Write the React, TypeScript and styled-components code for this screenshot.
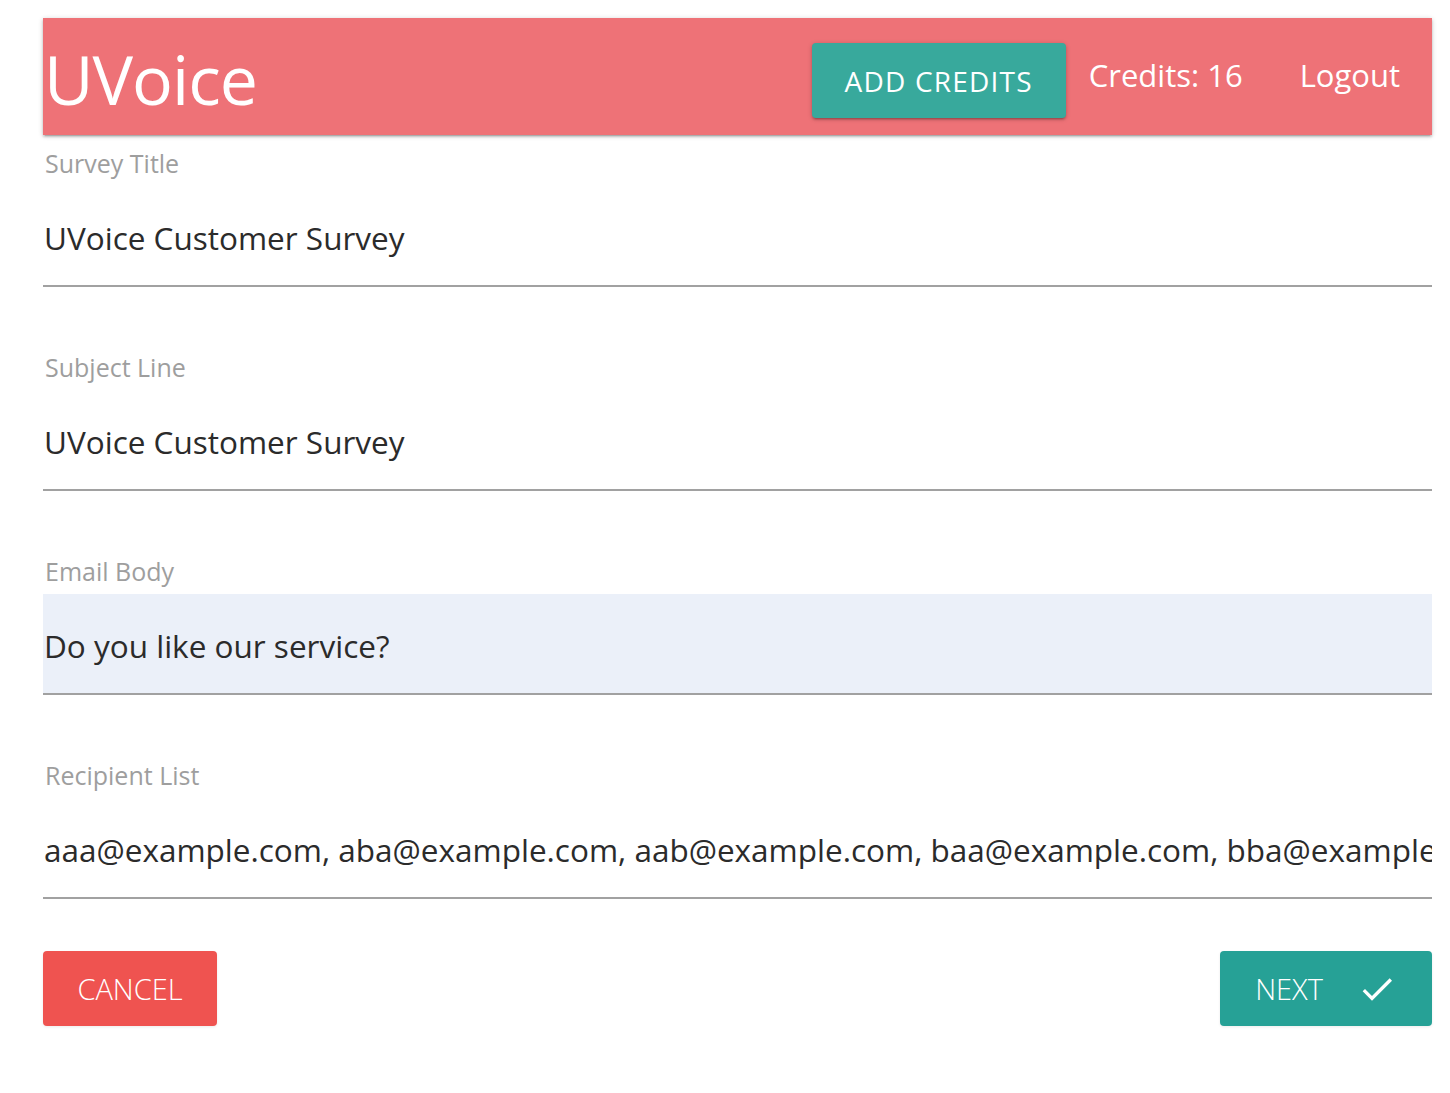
import React from "react";
import styled, { createGlobalStyle } from "styled-components";

const GlobalStyle = createGlobalStyle`
  html, body { margin: 0; padding: 0; background: #ffffff; }
  body { font-family: "Open Sans", "Noto Sans", sans-serif; }
  * { box-sizing: border-box; }
`;

const Page = styled.div`
  padding: 18px 18px 40px 43px;
`;

const Nav = styled.nav`
  height: 117px;
  background: #ee7277;
  display: flex;
  align-items: center;
  justify-content: space-between;
  box-shadow: 0 2px 2px 0 rgba(0,0,0,0.14), 0 3px 1px -2px rgba(0,0,0,0.12), 0 1px 5px 0 rgba(0,0,0,0.2);
`;

const Logo = styled.a`
  color: #fff;
  font-size: 68px;
  font-weight: 400;
  letter-spacing: -1px;
  padding-left: 1px;
  line-height: 1;
  margin-top: 4px;
  text-decoration: none;
`;

const NavItems = styled.div`
  display: flex;
  align-items: center;
  height: 100%;
  padding-right: 32px;
`;

const NavButton = styled.button`
  height: 75px;
  padding: 0 33px;
  margin-top: 8px;
  border: none;
  border-radius: 4px;
  background: #38a99c;
  color: #fff;
  font-family: inherit;
  font-size: 28px;
  letter-spacing: 1.2px;
  text-transform: uppercase;
  box-shadow: 0 2px 2px 0 rgba(0,0,0,0.14), 0 3px 1px -2px rgba(0,0,0,0.12), 0 1px 5px 0 rgba(0,0,0,0.2);
  margin-right: 23px;
`;

const NavText = styled.span<{ $gap?: number }>`
  color: #fff;
  font-size: 31px;
  margin-left: ${(p) => p.$gap ?? 0}px;
  margin-top: -4px;
`;

const Form = styled.form`
  display: flex;
  flex-direction: column;
  padding-top: 11px;
`;

const Field = styled.div`
  display: flex;
  flex-direction: column;
  gap: 6px;
  margin-bottom: 63px;
`;

const Label = styled.label`
  color: #9e9e9e;
  font-size: 25px;
  line-height: 34px;
  padding-left: 2px;
`;

const Input = styled.input<{ $filled?: boolean }>`
  height: 101px;
  border: none;
  border-bottom: 2px solid #a1a1a1;
  background: ${(p) => (p.$filled ? "#ebf0f9" : "transparent")};
  font-family: inherit;
  font-size: 31.5px;
  color: #2b2b2b;
  padding: 3px 0 0 1px;
  outline: none;
  width: 100%;
`;

const Actions = styled.div`
  display: flex;
  justify-content: space-between;
  margin-top: -11px;
`;

const ActionButton = styled.button<{ $color: string; $width: number }>`
  height: 75px;
  width: ${(p) => p.$width}px;
  border: none;
  border-radius: 4px;
  background: ${(p) => p.$color};
  color: #fff;
  font-family: inherit;
  font-size: 29px;
  font-weight: 300;
  text-transform: uppercase;
  display: flex;
  align-items: center;
  justify-content: center;
  gap: 34px;
  box-shadow: 0 1px 3px rgba(0,0,0,0.08);
`;

const fields = [
  { label: "Survey Title", value: "UVoice Customer Survey" },
  { label: "Subject Line", value: "UVoice Customer Survey" },
  { label: "Email Body", value: "Do you like our service?", filled: true },
  {
    label: "Recipient List",
    value:
      "aaa@example.com, aba@example.com, aab@example.com, baa@example.com, bba@example.com, bab@example.com",
  },
];

export default function App() {
  return (
    <>
      <GlobalStyle />
      <Page>
        <Nav>
          <Logo href="#">UVoice</Logo>
          <NavItems>
            <NavButton>Add Credits</NavButton>
            <NavText>Credits: 16</NavText>
            <NavText $gap={57}>Logout</NavText>
          </NavItems>
        </Nav>
        <Form>
          {fields.map((f) => (
            <Field key={f.label}>
              <Label>{f.label}</Label>
              <Input $filled={f.filled} defaultValue={f.value} readOnly />
            </Field>
          ))}
          <Actions>
            <ActionButton type="button" $color="#ef5350" $width={174}>
              Cancel
            </ActionButton>
            <ActionButton type="button" $color="#26a196" $width={212}>
              Next
              <svg width="40" height="40" viewBox="0 0 24 24" fill="#fff">
                <path d="M9 16.2L4.8 12l-1.4 1.4L9 19 21 7l-1.4-1.4L9 16.2z" />
              </svg>
            </ActionButton>
          </Actions>
        </Form>
      </Page>
    </>
  );
}
